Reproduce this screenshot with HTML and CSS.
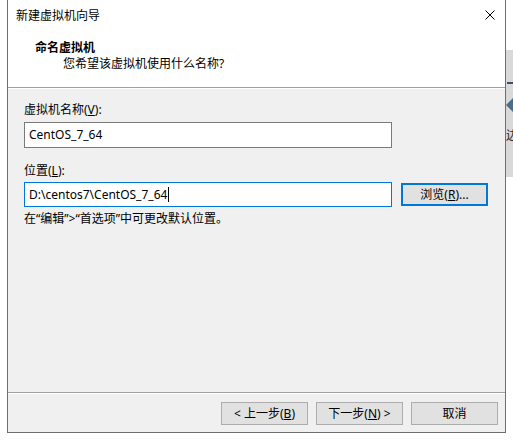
FILE: index.html
```html
<!DOCTYPE html>
<html lang="zh-CN">
<head>
<meta charset="utf-8">
<title>新建虚拟机向导</title>
<link rel="stylesheet" href="styles.css">
</head>
<body class="page">
  <div class="dialog">
    <div class="titlebar">
      <span class="title">新建虚拟机向导</span>
      <svg class="close" width="10" height="10" viewBox="0 0 10 10" aria-hidden="true">
        <path d="M0.5 0.5 L9.5 9.5 M9.5 0.5 L0.5 9.5" stroke="#000" stroke-width="1" fill="none"/>
      </svg>
    </div>
    <div class="header">
      <div class="h-title">命名虚拟机</div>
      <div class="h-sub">您希望该虚拟机使用什么名称?</div>
    </div>
    <div class="content">
      <div class="field-label">虚拟机名称(<u>V</u>):</div>
      <div class="row">
        <div class="textbox">CentOS_7_64</div>
      </div>
      <div class="field-label second">位置(<u>L</u>):</div>
      <div class="row loc">
        <div class="textbox focused">D:\centos7\CentOS_7_64<span class="caret"></span></div>
        <div class="btn default">浏览(<u>R</u>)...</div>
      </div>
      <div class="hint">在“编辑”&gt;“首选项”中可更改默认位置。</div>
    </div>
    <div class="footer">
      <div class="btn">&lt; 上一步(<u>B</u>)</div>
      <div class="btn">下一步(<u>N</u>) &gt;</div>
      <div class="btn">取消</div>
    </div>
  </div>
  <div class="backdrop">
    <div class="bg-panel">
      <div class="bg-bar"></div>
      <svg class="bg-arrow" width="7" height="14" viewBox="0 0 7 14" aria-hidden="true">
        <polygon points="0,7 7,0 7,14" fill="#4d6c88"/>
      </svg>
      <span class="bg-char">边</span>
    </div>
  </div>
</body>
</html>
```
FILE: styles.css
```css
html, body {
  margin: 0;
  padding: 0;
}
.page {
  width: 513px;
  height: 440px;
  background: #ffffff;
  display: flex;
  overflow: hidden;
  font-family: "Noto Sans", "Noto Sans CJK SC", sans-serif;
  font-size: 12px;
  color: #000;
}
.dialog {
  margin-left: 7px;
  width: 497px;
  height: 432px;
  border: 1px solid #6f6f6f;
  border-top: none;
  display: flex;
  flex-direction: column;
  background: #f0f0f0;
  flex: none;
}
.titlebar {
  height: 30px;
  background: #fff;
  display: flex;
  align-items: center;
  justify-content: space-between;
  padding: 1px 10px 0 8px;
  box-sizing: border-box;
}
.title {
  line-height: 16px;
}
.close {
  margin-top: -2px;
  display: block;
}
.header {
  background: #fff;
  border-bottom: 1px solid #a0a0a0;
  padding: 11px 0 0 27px;
  box-sizing: border-box;
  height: 58px;
}
.h-title {
  font-weight: bold;
  line-height: 14px;
}
.h-sub {
  line-height: 14px;
  margin-top: 2px;
  margin-left: 28px;
}
.content {
  flex: 1;
  border-top: 1px solid #fff;
  padding: 13px 0 0 16px;
}
.field-label {
  line-height: 16px;
}
.field-label.second {
  margin-top: 15px;
}
.row {
  display: flex;
  align-items: center;
  margin-top: 4px;
}
.row.loc {
  margin-top: 3px;
  gap: 9px;
}
.textbox {
  width: 368px;
  height: 26px;
  box-sizing: border-box;
  border: 1px solid #7a7a7a;
  background: #fff;
  padding-left: 4px;
  display: flex;
  align-items: center;
  line-height: 16px;
}
.textbox.focused {
  height: 25px;
  border-color: #0078d7;
}
.caret {
  display: inline-block;
  width: 1px;
  height: 15px;
  background: #000;
  margin-left: 1px;
}
.hint {
  margin-top: 4px;
  line-height: 16px;
}
.btn {
  width: 87px;
  height: 23px;
  box-sizing: border-box;
  border: 1px solid #adadad;
  background: #e1e1e1;
  display: flex;
  align-items: center;
  justify-content: center;
  line-height: 16px;
  flex: none;
}
.btn.default {
  border: 2px solid #0078d7;
}
.footer {
  height: 40px;
  box-sizing: border-box;
  border-top: 1px solid #a0a0a0;
  box-shadow: inset 0 1px 0 #fff;
  display: flex;
  justify-content: flex-end;
  align-items: flex-start;
  gap: 8px;
  padding: 9px 7px 0 0;
}
.backdrop {
  flex: 1;
  padding-top: 50px;
  overflow: hidden;
}
.bg-panel {
  height: 127px;
  background: #d9d9d9;
  display: flex;
  flex-direction: column;
  align-items: flex-start;
  overflow: hidden;
}
.bg-bar {
  margin-top: 32px;
  margin-left: 1px;
  width: 8px;
  height: 2px;
  background: #3d4f60;
}
.bg-arrow {
  display: block;
  margin-top: 14px;
}
.bg-char {
  margin-top: 17px;
  line-height: 14px;
  color: #222;
}
```
